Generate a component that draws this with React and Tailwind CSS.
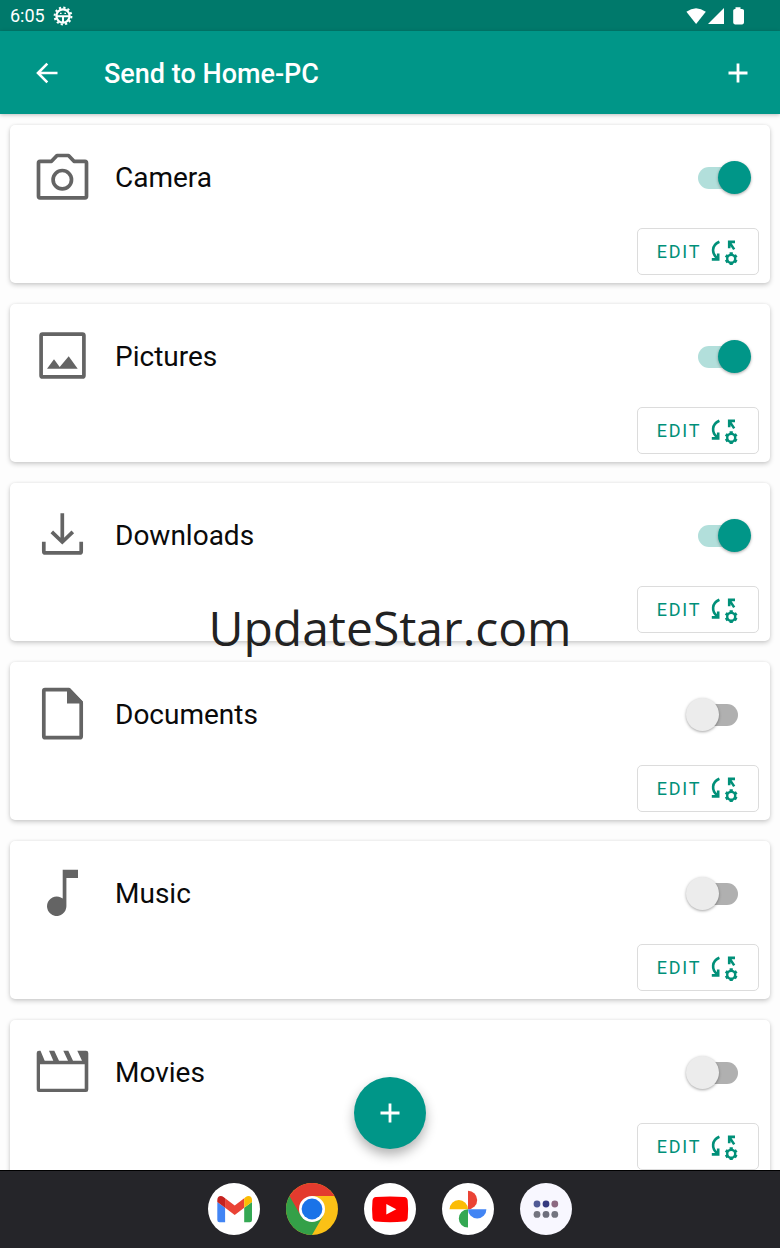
import { useState } from "react";

const FOLDERS = [
    { id: "camera", name: "Camera", enabled: true },
    { id: "pictures", name: "Pictures", enabled: true },
    { id: "downloads", name: "Downloads", enabled: true },
    { id: "documents", name: "Documents", enabled: false },
    { id: "music", name: "Music", enabled: false },
    { id: "movies", name: "Movies", enabled: false },
];

const folderShapes = {
    camera: (
        <g fill="none" stroke="currentColor" strokeWidth="3.7" strokeLinejoin="round">
            <path d="M9 14.3H20.5L26 8.5H37.5L43 14.3H54Q55.5 14.3 55.5 16V49.3Q55.5 50.8 54 50.8H9Q7.5 50.8 7.5 49.3V16Q7.5 14.3 9 14.3Z" />
            <circle cx="31.3" cy="32.7" r="9.2" />
        </g>
    ),
    pictures: (
        <>
            <rect x="10.1" y="8.1" width="42.8" height="42.8" rx="1.5" fill="none" stroke="currentColor" strokeWidth="3.7" />
            <path fill="currentColor" d="M16 42.7L23 33.3L28.7 41L37.7 30.3L46.7 42.7Z" />
        </>
    ),
    downloads: (
        <g fill="none" stroke="currentColor" strokeWidth="3.7">
            <path d="M31.3 8.3V37M20.8 26.8L31.3 37L41.8 26.8" />
            <path d="M12.8 36.7V46.4Q12.8 47.9 14.3 47.9H48.7Q50.2 47.9 50.2 46.4V36.7" />
        </g>
    ),
    documents: (
        <>
            <path
                fill="none"
                stroke="currentColor"
                strokeWidth="3.7"
                strokeLinejoin="round"
                d="M14 5.7H38L50.2 18.5V52.2Q50.2 53.7 48.7 53.7H14.3Q12.8 53.7 12.8 52.2V7Q12.8 5.7 14 5.7Z"
            />
            <path fill="currentColor" d="M36 4H38.7L52 17.8V19.5H36Z" />
        </>
    ),
    music: (
        <path fill="currentColor" d="M31.7 6.7H47V15H35.4V43.3A9.7 9.7 0 1 1 31.7 35.6Z" />
    ),
    movies: (
        <path
            fill="currentColor"
            fillRule="evenodd"
            d="M8 8.7H55Q57.3 8.7 57.3 11V47.5Q57.3 50 55 50H8Q5.7 50 5.7 47.5V11Q5.7 8.7 8 8.7ZM9 22.3V46.7H53.7V22.3ZM9.5 8.7L13.7 18.7H22.3L18 8.7ZM23.3 8.7L28 18.7H37L32.3 8.7ZM37.3 8.7L42 18.7H51L46.3 8.7Z"
        />
    ),
};

const FolderIcon = ({ id }) => (
    <svg viewBox="0 0 62 62" className="size-[62px] shrink-0 text-[#646464]" aria-hidden="true">
        {folderShapes[id]}
    </svg>
);

const SyncSettingsIcon = () => (
    <svg viewBox="0 0 30 30" className="size-[30px] shrink-0" fill="none" stroke="currentColor" strokeWidth="2.6" aria-hidden="true">
        <path d="M10.4 4.8C2.6 8.2 2.1 16.5 8.6 21.6M9.2 16.5V22.4H2.8" />
        <path d="M26 4.9H20.2V11.2M20.2 4.9L25.2 12.4" />
        <circle cx="22.2" cy="21.7" r="4" strokeWidth="2.4" />
        <path
            strokeWidth="3.2"
            d="M22.2 15.3V17.6M22.2 25.8V28.1M16.7 18.5L18.7 19.7M25.7 23.7L27.7 24.9M16.7 24.9L18.7 23.7M25.7 19.7L27.7 18.5"
        />
    </svg>
);

const PlusIcon = () => (
    <svg viewBox="0 0 20 20" className="size-5" fill="none" stroke="currentColor" strokeWidth="2.8" aria-hidden="true">
        <path d="M10 .5V19.5M.5 10H19.5" />
    </svg>
);

const StatusBar = () => (
    <div className="flex h-[31px] shrink-0 items-center bg-[#00796b] pr-9 pl-[10px] text-white">
        <span className="text-lg leading-6">6:05</span>
        <svg viewBox="0 0 20 20" className="ml-2 size-5" aria-hidden="true">
            <circle cx="10" cy="10" r="8.4" fill="none" stroke="currentColor" strokeWidth="2" strokeDasharray="2.2 2.2" />
            <circle cx="10" cy="10" r="6.6" fill="none" stroke="currentColor" strokeWidth="2.2" />
            <path fill="none" stroke="currentColor" strokeWidth="2" d="M4 10.3H16M10 10V16.5" />
            <path fill="none" stroke="currentColor" strokeWidth="1.2" d="M7 7.4H8.6M11.4 7.4H13" />
        </svg>
        <svg viewBox="0 0 60 20" className="ml-auto h-5 w-[60px]" fill="currentColor" aria-hidden="true">
            <path d="M2.4 5.8Q12 -1.4 21.8 5.8L12.1 18Z" />
            <path d="M24 18L40 2V18Z" />
            <path d="M51.5 1.2H56.5V3H58Q60 3 60 4.5V16.6Q60 18.4 58.2 18.4H51Q49.2 18.4 49.2 16.6V4.5Q49.2 3 51 3H51.5Z" />
        </svg>
    </div>
);

const FolderCard = ({ folder, onToggle }) => (
    <li className="flex h-[158px] shrink-0 flex-col justify-between rounded-[5px] bg-white pt-[22px] pb-2 shadow-[0_2px_5px_rgba(0,0,0,0.2),0_0_3px_rgba(0,0,0,0.06)]">
        <div className="flex items-center pr-8 pl-[21px]">
            <FolderIcon id={folder.id} />
            <label htmlFor={folder.id} className="ml-[22px] flex-1 text-[28px] leading-9 text-[#0a0a0a]">
                {folder.name}
            </label>
            <input
                id={folder.id}
                type="checkbox"
                role="switch"
                checked={folder.enabled}
                onChange={() => onToggle(folder.id)}
                className="relative h-[22px] w-10 appearance-none rounded-full bg-[#b0b0b0] before:absolute before:-top-[6px] before:-left-3 before:size-[33px] before:rounded-full before:bg-[#ececec] before:shadow-[0_1px_3px_rgba(0,0,0,0.35)] checked:bg-[#b2dfdb] checked:before:left-5 checked:before:bg-[#009688]"
            />
        </div>
        <button
            type="button"
            className="mr-[11px] flex h-[47px] w-[122px] items-center justify-center gap-2 self-end rounded-[5px] border border-[#dcdcdc] text-lg leading-6 tracking-widest text-[#009079]"
        >
            EDIT
            <SyncSettingsIcon />
        </button>
    </li>
);

const dockApps = [
    {
        name: "Gmail",
        art: (
            <>
                <circle cx="26" cy="26" r="26" fill="#fff" />
                <path fill="#4285f4" d="M9.3 19L17.1 24.8V39.3H11.5Q9.3 39.3 9.3 37Z" />
                <path fill="#34a853" d="M44 19L36.2 24.8V39.3H41.8Q44 39.3 44 37Z" />
                <path fill="#ea4335" d="M17.1 15.3L26.7 22.6L36.2 15.3V24.8L26.7 32L17.1 24.8Z" />
                <path fill="#c5221f" d="M9.3 17Q9.5 13.2 12.8 13Q14.3 13 15.5 14.1L17.1 15.3V24.8L9.3 19Z" />
                <path fill="#fbbc04" d="M44 17Q43.8 13.2 40.5 13Q39 13 37.8 14.1L36.2 15.3V24.8L44 19Z" />
            </>
        ),
    },
    {
        name: "Chrome",
        art: (
            <>
                <circle cx="26" cy="26" r="26" fill="#fbc116" />
                <path fill="#34a048" d="M3.5 13A26 26 0 0 0 26 52L37.3 32.5L26 26Z" />
                <path fill="#e33b2e" d="M3.5 13A26 26 0 0 1 48.5 13H26L14.7 32.5Z" />
                <circle cx="26" cy="26" r="13" fill="#fff" />
                <circle cx="26" cy="26" r="10.4" fill="#1a73e8" />
            </>
        ),
    },
    {
        name: "YouTube",
        art: (
            <>
                <circle cx="26" cy="26" r="26" fill="#fff" />
                <path fill="#f00" d="M12 14Q26 13 40.2 14Q43.2 14.2 43.7 17.5Q44.6 26 43.7 35Q43.2 38.2 40.2 38.6Q26 39.8 12 38.6Q9 38.2 8.5 35Q7.6 26 8.5 17.5Q9 14.2 12 14Z" />
                <path fill="#fff" d="M22.3 21L32.3 26.2L22.3 31.4Z" />
            </>
        ),
    },
    {
        name: "Photos",
        art: (
            <>
                <circle cx="26" cy="26" r="26" fill="#fff" />
                <path fill="#ea4335" d="M26 7.8A9.2 9.2 0 0 1 26 26.2Z" />
                <path fill="#fbbc04" d="M7.6 26.2A9.2 9.2 0 0 1 26 26.2Z" />
                <path fill="#4285f4" d="M26 26.2H44.4A9.2 9.2 0 0 1 26 26.2Z" />
                <path fill="#34a853" d="M26 26.2V44.6A9.2 9.2 0 0 1 26 26.2Z" />
            </>
        ),
    },
    {
        name: "All apps",
        art: (
            <>
                <circle cx="26" cy="26" r="26" fill="#f8f7ff" />
                <circle cx="17" cy="21" r="3.4" fill="#505a96" />
                <circle cx="26" cy="21" r="3.4" fill="#353a80" />
                <circle cx="34.8" cy="21" r="3.4" fill="#8c6880" />
                <circle cx="17" cy="31.4" r="3.4" fill="#73747f" />
                <circle cx="26" cy="31.4" r="3.4" fill="#6d6e7c" />
                <circle cx="34.8" cy="31.4" r="3.4" fill="#73747f" />
            </>
        ),
    },
];

const Dock = () => (
    <nav className="flex h-[78px] shrink-0 items-center justify-center gap-[26px] bg-[#252529] shadow-[inset_0_1px_0_#000]">
        {dockApps.map((app) => (
            <button key={app.name} type="button" aria-label={app.name} className="rounded-full">
                <svg viewBox="0 0 52 52" className="block size-[52px]" aria-hidden="true">
                    {app.art}
                </svg>
            </button>
        ))}
    </nav>
);

const App = () => {
    const [folders, setFolders] = useState(FOLDERS);

    const handleToggle = (id) => {
        setFolders((prev) => prev.map((f) => (f.id === id ? { ...f, enabled: !f.enabled } : f)));
    };

    return (
        <div className="relative flex h-screen flex-col overflow-hidden bg-[#fdfdfd] font-['Roboto',sans-serif]">
            <StatusBar />

            <header className="z-10 flex h-[83px] shrink-0 items-center bg-[#009688] px-8 text-white shadow-[0_1px_4px_rgba(0,0,0,0.25)]">
                <button type="button" aria-label="Back" className="flex size-[30px] items-center justify-center">
                    <svg viewBox="0 0 22 22" className="size-[22px]" fill="none" stroke="currentColor" strokeWidth="2.6" aria-hidden="true">
                        <path d="M21.5 11H2.2M11.3 1.6L2 11L11.3 20.4" />
                    </svg>
                </button>
                <h1 className="ml-[42px] flex-1 pt-0.5 text-[27px] leading-8 font-medium">Send to Home-PC</h1>
                <button type="button" aria-label="Add folder" className="flex size-5 items-center justify-center">
                    <PlusIcon />
                </button>
            </header>

            <main className="relative min-h-0 flex-1 overflow-hidden">
                <ul className="flex h-full flex-col gap-[21px] overflow-hidden px-[10px] pt-[11px]">
                    {folders.map((folder) => (
                        <FolderCard key={folder.id} folder={folder} onToggle={handleToggle} />
                    ))}
                </ul>
                <button
                    type="button"
                    aria-label="Add"
                    className="absolute bottom-[21px] left-1/2 flex size-[72px] -translate-x-1/2 items-center justify-center rounded-full bg-[#009688] text-white shadow-[0_6px_12px_rgba(0,0,0,0.3)]"
                >
                    <PlusIcon />
                </button>
            </main>

            <Dock />

            <div className="pointer-events-none absolute inset-0 z-20 flex items-center justify-center pt-2">
                <span className="font-['Open_Sans','Noto_Sans',sans-serif] text-[48px] leading-[60px] text-[#222]">UpdateStar.com</span>
            </div>
        </div>
    );
};

export default App;
